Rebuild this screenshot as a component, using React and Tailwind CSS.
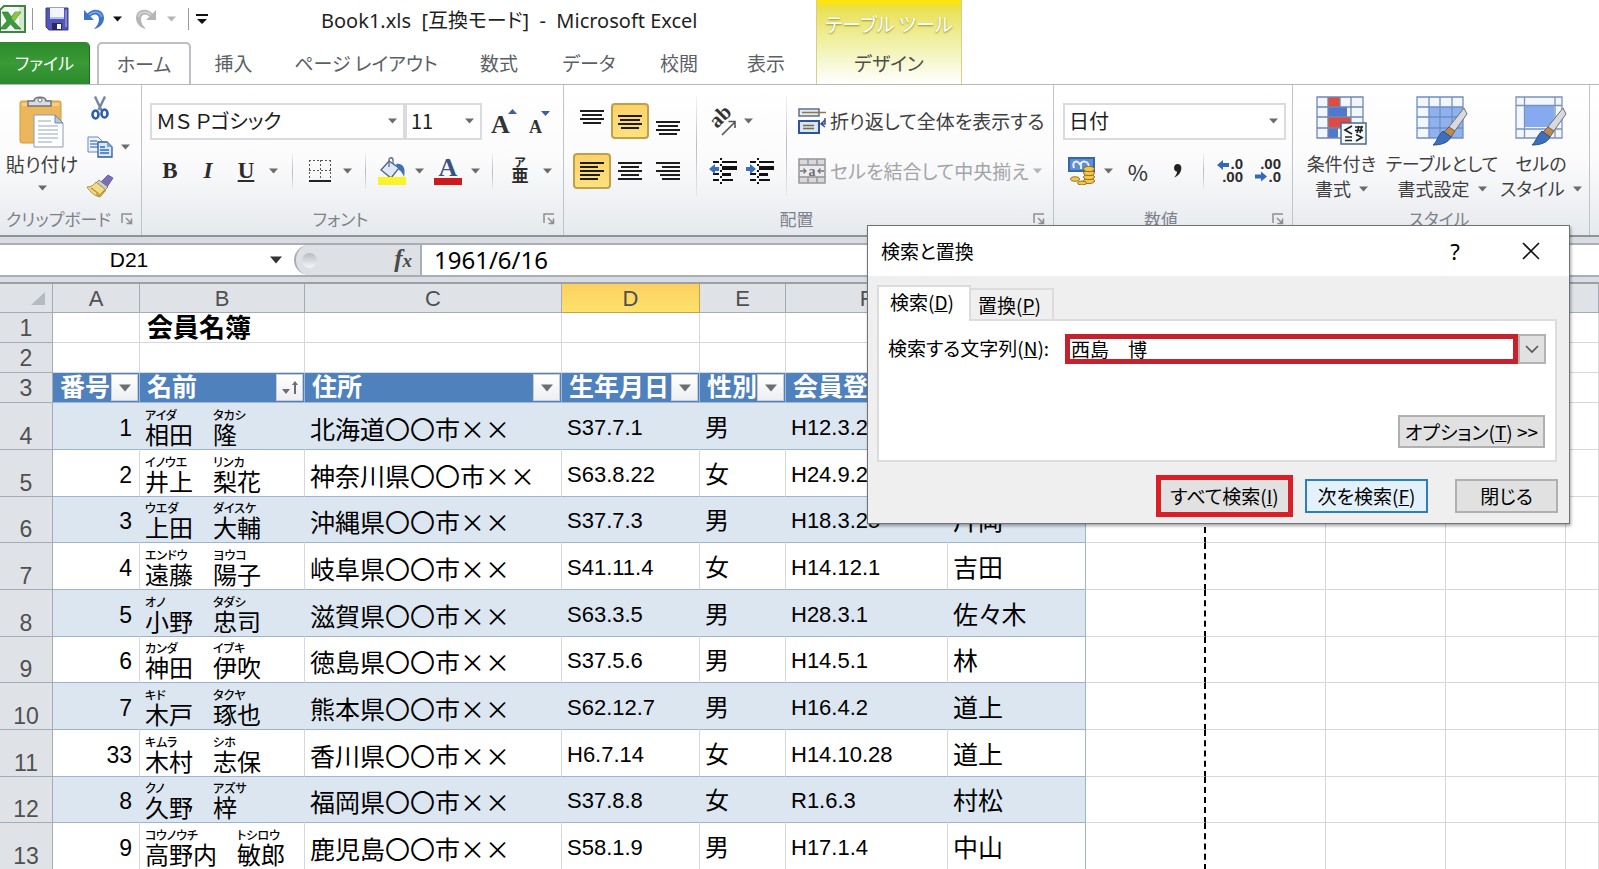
import { useState } from "react";

const tabs = [
  { label: "挿入", width: "w-[85px]" },
  { label: "ページ レイアウト", width: "w-[180px]" },
  { label: "数式", width: "w-[86px]" },
  { label: "データ", width: "w-[94px]" },
  { label: "校閲", width: "w-[86px]" },
  { label: "表示", width: "w-[88px]" },
];

const columns = [
  { letter: "A", width: "w-[87px]" },
  { letter: "B", width: "w-[165px]" },
  { letter: "C", width: "w-[257px]" },
  { letter: "D", width: "w-[138px]" },
  { letter: "E", width: "w-[86px]" },
  { letter: "F", width: "w-[162px]" },
  { letter: "G", width: "w-[138px]" },
  { letter: "H", width: "w-[120px]" },
  { letter: "I", width: "w-[120px]" },
  { letter: "J", width: "w-[120px]" },
  { letter: "K", width: "w-[120px]" },
  { letter: "L", width: "" },
];

const members = [
  { row: 4, no: 1, name: [["アイダ", "相田"], ["タカシ", "隆"]], pref: "北海道", birth: "S37.7.1", sex: "男", joined: "H12.3.2", staff: "" },
  { row: 5, no: 2, name: [["イノウエ", "井上"], ["リンカ", "梨花"]], pref: "神奈川県", birth: "S63.8.22", sex: "女", joined: "H24.9.2", staff: "" },
  { row: 6, no: 3, name: [["ウエダ", "上田"], ["ダイスケ", "大輔"]], pref: "沖縄県", birth: "S37.7.3", sex: "男", joined: "H18.3.25", staff: "片岡" },
  { row: 7, no: 4, name: [["エンドウ", "遠藤"], ["ヨウコ", "陽子"]], pref: "岐阜県", birth: "S41.11.4", sex: "女", joined: "H14.12.1", staff: "吉田" },
  { row: 8, no: 5, name: [["オノ", "小野"], ["タダシ", "忠司"]], pref: "滋賀県", birth: "S63.3.5", sex: "男", joined: "H28.3.1", staff: "佐々木" },
  { row: 9, no: 6, name: [["カンダ", "神田"], ["イブキ", "伊吹"]], pref: "徳島県", birth: "S37.5.6", sex: "男", joined: "H14.5.1", staff: "林" },
  { row: 10, no: 7, name: [["キド", "木戸"], ["タクヤ", "琢也"]], pref: "熊本県", birth: "S62.12.7", sex: "男", joined: "H16.4.2", staff: "道上" },
  { row: 11, no: 33, name: [["キムラ", "木村"], ["シホ", "志保"]], pref: "香川県", birth: "H6.7.14", sex: "女", joined: "H14.10.28", staff: "道上" },
  { row: 12, no: 8, name: [["クノ", "久野"], ["アズサ", "梓"]], pref: "福岡県", birth: "S37.8.8", sex: "女", joined: "R1.6.3", staff: "村松" },
  { row: 13, no: 9, name: [["コウノウチ", "高野内"], ["トシロウ", "敏郎"]], pref: "鹿児島", birth: "S58.1.9", sex: "男", joined: "H17.1.4", staff: "中山" },
];

const Caret = ({ className = "text-[#6b6b6b]" }) => (
  <svg viewBox="0 0 9 6" className={`h-[6px] w-[9px] shrink-0 ${className}`} fill="currentColor" aria-hidden="true">
    <path d="M0 0.5h9L4.5 5.5z" />
  </svg>
);

const CaretButton = ({ label, className }) => (
  <button type="button" aria-label={label} className={`flex h-9 items-center justify-center ${className}`}>
    <Caret />
  </button>
);

const Tool = ({ label, className = "w-[38px]", active = false, children }) => (
  <button
    type="button"
    aria-label={label}
    className={`flex h-9 shrink-0 items-center justify-center rounded-[4px] ${className} ${
      active ? "border-2 border-[#c2a04a] bg-linear-to-b from-[#fbd26a] to-[#fde27c]" : ""
    }`}
  >
    {children}
  </button>
);

const Separator = ({ className }) => (
  <div className={`flex shrink-0 justify-center ${className}`}>
    <div className="w-px bg-linear-to-b from-[#f4f4f4] via-[#b9bcc2] to-[#e8e8e8]" />
  </div>
);

const Launcher = () => (
  <button type="button" aria-label="ダイアログ起動" className="flex h-6 w-5 items-center justify-center">
    <svg viewBox="0 0 12 12" className="size-3" fill="none" stroke="#8f8f8f" strokeWidth="1.5">
      <path d="M1 10V1h10M5 5l5 5M10.500 5.500v5h-5" />
      <path d="M7 10.500l3.500-3.500v3.500z" fill="#8f8f8f" stroke="none" />
    </svg>
  </button>
);

const Group = ({ title, className, launcher = true, children }) => (
  <section className={`flex shrink-0 flex-col border-r border-[#bfc3ca] pt-[11px] ${className}`} aria-label={title}>
    <div className="h-[100px]">{children}</div>
    <div className="flex h-[39px] items-end pr-1 pb-1 text-[17px] leading-6 text-[#7d828c]">
      <div className="flex-1 text-center whitespace-nowrap">{title}</div>
      {launcher && <Launcher />}
    </div>
  </section>
);

const Combo = ({ label, value, className }) => (
  <div className={`relative h-[37px] shrink-0 ${className}`}>
    <select
      aria-label={label}
      className="h-full w-full appearance-none border-2 border-[#d9dbde] bg-white pr-6 pl-1 text-[20px] leading-7 text-[#1c1c1c]"
    >
      <option>{value}</option>
    </select>
    <div className="pointer-events-none absolute inset-y-0 right-2 flex items-center">
      <Caret />
    </div>
  </div>
);

// lines: [x, width] pairs, one every 4px
const Lines = ({ lines, className = "" }) => (
  <svg viewBox="0 0 24 20" className={`h-5 w-6 ${className}`} shapeRendering="crispEdges" fill="#1d1d1d">
    {lines.map(([x, w], i) => (
      <rect key={i} x={x} y={i * 4} width={w} height="2" />
    ))}
  </svg>
);

const vLines = [[0, 24], [2, 20], [0, 24], [3, 18]];

const ExcelLogo = () => (
  <svg viewBox="0 0 26 28" className="h-7 w-[26px]">
    <path d="M4 1h21v26H0V5z" fill="#f4faf2" stroke="#3f8346" strokeWidth="2" />
    <path d="M19 2h5v24h-5z" fill="#d3e8cf" />
    <path d="M2 7h6l3.500 5L15 7h6l-7 9.500 7 7.500h-6l-4.500-5L6 24H0l7-8z" fill="#3c9a3f" stroke="#23732b" strokeWidth="0.600" />
    <path d="M15 7h6l-7 9.500-2.500-3.500z" fill="#8cc63f" />
  </svg>
);

const SaveIcon = () => (
  <svg viewBox="0 0 24 24" className="size-6">
    <path d="M1 1h22v22H4l-3-3z" fill="#5356b5" stroke="#3a3c8c" />
    <path d="M5 1h14v11H5z" fill="#f3f5fc" />
    <path d="M5 10h14v2H5z" fill="#b9c3ea" />
    <path d="M7 16h10v7H7z" fill="#26286b" />
    <path d="M12 17h4v5h-4z" fill="#fff" />
    <path d="M20 3h2v17h-2z" fill="#8486d6" />
  </svg>
);

const UndoIcon = ({ color, light, flip }) => (
  <svg viewBox="0 0 22 22" className={`size-[22px] ${flip ? "-scale-x-100" : ""}`}>
    <path d="M1 2v10h10L7.500 8.500C11 5 16 6 16 11c0 4-2 7-5 10 6-1 10-6 10-11C21 1 10-1 4.500 5.500z" fill={color} />
    <path d="M6 7C11 2 18 4 18.500 9" fill="none" stroke={light} strokeWidth="1.500" />
  </svg>
);

const PasteIcon = () => (
  <svg viewBox="0 0 46 52" className="h-[52px] w-[46px]">
    <rect x="1" y="5" width="41" height="42" rx="2" fill="#ecb65a" stroke="#d39a3d" />
    <path d="M3 7h37v3H3z" fill="#f6cf86" />
    <path d="M9 10V5h6c0-5 12-5 12 0h5v5z" fill="#d9dce1" stroke="#6f757f" strokeWidth="1.500" />
    <circle cx="21" cy="4" r="2" fill="#fff" stroke="#6f757f" />
    <path d="M15 19h21l8 8v24H15z" fill="#fff" stroke="#8c9ab5" />
    <path d="M36 19v8h8z" fill="#b8c7e3" stroke="#6f84ad" />
    <path d="M19 25h13M19 30h20M19 34h20M19 38h20M19 42h20M19 46h14" stroke="#b6c3da" strokeWidth="1.500" />
  </svg>
);

const ScissorsIcon = () => (
  <svg viewBox="0 0 18 24" className="h-6 w-[18px]" fill="none">
    <path d="M4 0.500l6.500 14M14 0.500L7.500 14" stroke="#7485a6" strokeWidth="2.400" />
    <ellipse cx="4.500" cy="18.500" rx="3" ry="4" stroke="#2f5db0" strokeWidth="2.600" />
    <ellipse cx="13.500" cy="17.500" rx="3" ry="4" stroke="#2f5db0" strokeWidth="2.600" />
  </svg>
);

const CopyIcon = () => (
  <svg viewBox="0 0 26 22" className="h-[22px] w-[26px]">
    <path d="M1 1h10l4 4v11H1z" fill="#eef4fd" stroke="#6d88b5" />
    <path d="M3 5h7M3 8h9M3 11h9" stroke="#5d8bd0" strokeWidth="1.300" />
    <path d="M11 6h9l5 5v10H11z" fill="#d9e8fb" stroke="#2f5b9d" strokeWidth="1.300" />
    <path d="M20 6v5h5z" fill="#7fa6dd" />
    <path d="M13 11h5M13 14h9M13 17h9" stroke="#2f6cc2" strokeWidth="1.300" />
  </svg>
);

const BrushIcon = () => (
  <svg viewBox="0 0 28 24" className="h-6 w-7">
    <path d="M22 1l5 3-6 9-6-5z" fill="#7a6fb5" stroke="#554b8e" strokeWidth="0.800" />
    <path d="M13 6l9 7-3 3-9-7z" fill="#c9ced8" stroke="#6c7280" strokeWidth="0.800" />
    <path d="M10 8l10 8-6 7C9 22 4 18 1 13c4 0 7-2 9-5z" fill="#f0dc8a" stroke="#ad8f3a" />
    <path d="M5 14l8 6M10 20l3 2 6-6" stroke="#b98f2f" strokeWidth="1.300" fill="none" />
  </svg>
);

const GrowFont = ({ shrink }) => (
  <svg viewBox="0 0 28 30" className="h-[30px] w-7 overflow-visible">
    <text x="0" y="27" fontFamily="Liberation Serif, serif" fontWeight="700" fontSize={shrink ? 18 : 26} fill="#333">A</text>
    <path d={shrink ? "M12 5h9l-4.500 5z" : "M17 8h9l-4.500-5z"} fill="#3b5ea8" />
  </svg>
);

const BorderIcon = () => (
  <svg viewBox="0 0 24 24" className="size-6" shapeRendering="crispEdges" fill="none">
    <path d="M1 1.500h22M1 11.500h22M1.500 1v19M12 1v19M22.500 1v19" stroke="#555" strokeDasharray="2 2" />
    <path d="M1 22h22" stroke="#222" strokeWidth="2" />
  </svg>
);

const FillIcon = () => (
  <svg viewBox="0 0 28 28" className="size-7">
    <path d="M11 4l10 7-8 10L3 13z" fill="#dfe8f5" stroke="#4f6286" strokeWidth="1.300" />
    <path d="M11 10V3c0-3 4-3 4 0v4" fill="none" stroke="#5d6d8a" strokeWidth="1.300" />
    <path d="M18 7c7-1 10 4 8 13-1-3-3-6-5-7z" fill="#3e71b8" />
    <path d="M0 20h28v8H0z" fill="#fbf329" />
  </svg>
);

const FontColorIcon = () => (
  <svg viewBox="0 0 28 28" className="size-7 overflow-visible">
    <text x="14" y="19" textAnchor="middle" fontFamily="Liberation Serif, serif" fontWeight="700" fontSize="26" fill="#3b5382">A</text>
    <path d="M0 21h28v7H0z" fill="#cc1b1f" />
  </svg>
);

const OrientIcon = () => (
  <svg viewBox="0 0 28 28" className="mt-1 ml-1 size-7 shrink-0 overflow-visible">
    <text x="0" y="0" transform="translate(7 20) rotate(-45)" fontFamily="Liberation Serif, serif" fontWeight="700" fontSize="21" fill="#333">ab</text>
    <path d="M12 26l13-13M18.500 12.500H25V19" fill="none" stroke="#555" strokeWidth="1.600" />
  </svg>
);

const IndentIcon = ({ out }) => (
  <svg viewBox="0 0 28 26" className="h-[26px] w-7" fill="#111">
    <g shapeRendering="crispEdges">
      <path d="M4 3h6v2H4zM4 15h6v2H4zM4 21h6v2H4zM13 3h15v2H13zM13 8h15v4H13zM13 15h9v3H13zM13 21h11v2H13z" />
      <path d="M11 0h2v2h-2zM11 6h2v2h-2zM11 12h2v2h-2zM11 18h2v2h-2zM11 24h2v2h-2z" />
    </g>
    <path d={out ? "M0 11l6-5v3h4v4H6v3z" : "M10 11L4 6v3H0v4h4v3z"} fill="#3b6fc0" />
  </svg>
);

const WrapIcon = () => (
  <svg viewBox="0 0 28 26" className="h-[26px] w-7 shrink-0">
    <path d="M1 1h20v7H1z" fill="#e6eaf1" stroke="#5d6f8f" strokeWidth="1.500" />
    <path d="M4 4.500h24" stroke="#8d7b3d" strokeWidth="1.500" />
    <path d="M1 13h20v12H1z" fill="#d9e5f8" stroke="#2f549b" strokeWidth="2" />
    <path d="M5 17.500h11M5 20.500h11" stroke="#7d6d3a" strokeWidth="1.500" />
    <path d="M27 10v6h-3M27 12l-4 4 4 3" fill="none" stroke="#3a4f9b" strokeWidth="1.500" />
  </svg>
);

const MergeIcon = () => (
  <svg viewBox="0 0 28 26" className="h-[26px] w-7 shrink-0">
    <path d="M1 1h26v24H1z" fill="#d9d9dc" stroke="#97979b" strokeWidth="1.500" />
    <path d="M1 7h26M1 19h26M10 1v6M19 1v6M10 19v6M19 19v6" stroke="#97979b" strokeWidth="1.500" />
    <path d="M2 8h24v10H2z" fill="#ececee" />
    <text x="14" y="17.500" textAnchor="middle" fontFamily="Liberation Serif, serif" fontWeight="700" fontSize="14" fill="#6e6e72">a</text>
    <path d="M2 13h6M5.500 10.500L8 13l-2.500 2.500M26 13h-6M22.500 10.500L20 13l2.500 2.500" fill="none" stroke="#77777b" strokeWidth="1.300" />
  </svg>
);

const MoneyIcon = () => (
  <svg viewBox="0 0 28 28" className="size-7">
    <path d="M0 0h27v15H0z" fill="#3766ad" />
    <path d="M2 2h23v11H2z" fill="#5f8fd3" />
    <path d="M6 11c-3-8 5-8 6-3 1-5 9-5 9 3M13 5v7" fill="none" stroke="#e9f1fd" strokeWidth="2" />
    <g fill="#f2c84c" stroke="#8a6718" strokeWidth="0.900">
      <ellipse cx="21" cy="24" rx="5.500" ry="2.600" />
      <ellipse cx="21" cy="20" rx="5.500" ry="2.600" />
      <ellipse cx="21" cy="16" rx="5.500" ry="2.600" />
      <ellipse cx="21" cy="12" rx="5.500" ry="2.600" />
      <ellipse cx="7" cy="22" rx="4.500" ry="2.200" />
      <ellipse cx="14" cy="26" rx="4.500" ry="2" />
    </g>
  </svg>
);

const DecimalIcon = ({ less }) => (
  <svg viewBox="0 0 28 26" className="h-[26px] w-7 overflow-visible" fontFamily="Liberation Sans, sans-serif" fontWeight="700" fontSize="15" fill="#2b2b2b">
    <text x="27" y="11" textAnchor="end">{less ? ".00" : ".0"}</text>
    <text x="27" y="24" textAnchor="end">{less ? ".0" : ".00"}</text>
    <path
      d={less ? "M13 18.500L7 13.500v3H1v4h6v3z" : "M1 7l6-5v3h6v4H7v3z"}
      fill="#3569b5"
    />
  </svg>
);

const PaintBrush = () => (
  <g>
    <path d="M48 12l3 6-13 18-6-4z" fill="#d7d9dd" stroke="#6b6e75" />
    <path d="M33 31l6 4-4 6-7-5z" fill="#b98a55" stroke="#7d5c34" />
    <path d="M27 35l8 6c-3 6-10 8-18 8 4-3 5-10 10-14z" fill="#3f6fba" stroke="#2b5191" />
  </g>
);

const CondIcon = () => (
  <svg viewBox="0 0 52 50" className="h-[50px] w-[52px]">
    <path d="M1 1h46v41H1z" fill="#f2f7fd" />
    <path d="M12 1h12v10H12zM12 21h23v11H12z" fill="#e04a40" />
    <path d="M12 11h19v10H12zM12 32h10v10H12z" fill="#5078cf" />
    <path d="M1 1h46v41H1zM1 11h46M1 21h46M1 32h46M12 1v41M24 1v10M35 1v41" fill="none" stroke="#7088b0" strokeWidth="1.300" />
    <path d="M25 27h25v21H25z" fill="#f7fafd" stroke="#49698f" strokeWidth="1.500" />
    <path d="M36 30l-7 4 7 4M29 41h7M29 44.500h7M39 31h8M39 34.500h8M41 37l2-7M44 37l2-7M40 38.500l6 3-6 3.500" fill="none" stroke="#222" strokeWidth="1.700" />
  </svg>
);

const TableStyleIcon = () => (
  <svg viewBox="0 0 52 50" className="h-[50px] w-[52px]">
    <path d="M1 1h46v41H1z" fill="#f2f7fd" />
    <path d="M13 11h34v31H13z" fill="#8fb2ee" />
    <path d="M1 1h46v41H1zM1 11h46M1 21h46M1 32h46M13 1v41M24 1v41M36 1v41" fill="none" stroke="#6f8fc2" strokeWidth="1.300" />
    <PaintBrush />
  </svg>
);

const CellStyleIcon = () => (
  <svg viewBox="0 0 52 50" className="h-[50px] w-[52px]">
    <path d="M1 1h46v41H1z" fill="#f2f7fd" />
    <path d="M10 10h29v21H10z" fill="#86aaf0" />
    <path d="M1 1h46v41H1zM1 9.500h46M1 33h46M9.500 1v41M40 1v41" fill="none" stroke="#7d93b8" strokeWidth="1.300" />
    <PaintBrush />
  </svg>
);

const BigTool = ({ icon, lines, className }) => (
  <button type="button" className={`flex shrink-0 flex-col items-center text-[18px] leading-[25px] whitespace-nowrap text-[#3f3f3f] ${className}`}>
    {icon}
    <span className="mt-[5px]">{lines[0]}</span>
    <span className="flex items-center gap-2">
      {lines[1]}
      <Caret />
    </span>
  </button>
);

const Header = () => (
  <header className="flex h-[85px] border-b border-[#b5b8bd] bg-white">
    <div className="flex w-[816px] shrink-0 flex-col">
      <div className="flex h-[42px] items-center pb-1">
        <div className="flex w-[321px] items-center">
          <ExcelLogo />
          <div className="mx-[6px] h-[22px] w-px bg-[#9a9a9a]" />
          <button type="button" aria-label="上書き保存" className="ml-[6px]"><SaveIcon /></button>
          <button type="button" aria-label="元に戻す" className="ml-[14px]"><UndoIcon color="#3e74c4" light="#7fa9e4" /></button>
          <button type="button" aria-label="元に戻す一覧" className="ml-2"><Caret className="text-[#111]" /></button>
          <button type="button" aria-label="やり直し" className="ml-[13px]"><UndoIcon color="#b4b6ba" light="#d6d7da" flip /></button>
          <button type="button" aria-label="やり直し一覧" className="ml-[10px]"><Caret className="text-[#b4b6ba]" /></button>
          <div className="mx-[7px] ml-[12px] h-[22px] w-px bg-[#9a9a9a]" />
          <button type="button" aria-label="ツールバーのカスタマイズ">
            <svg viewBox="0 0 12 12" className="size-3"><path d="M0 1h12v2H0zM1 6h10l-5 5z" fill="#111" /></svg>
          </button>
        </div>
        <h1 className="pt-1 font-['Noto_Sans','Noto_Sans_CJK_JP',sans-serif] text-[20px] leading-7 whitespace-pre text-[#1f1f1f]">
          {"Book1.xls  [互換モード]  -  Microsoft Excel"}
        </h1>
      </div>
      <nav className="flex h-[43px] items-stretch text-[19px] leading-7 text-[#5c5f66]">
        <button type="button" className="w-[90px] rounded-tr-[5px] border-r border-[#1d6b22] bg-linear-to-b from-[#2c8a2c] via-[#3a9a35] to-[#2b8a2d] text-[17px] text-white">
          ファイル
        </button>
        <button type="button" className="ml-[7px] w-[94px] rounded-t-[5px] border-2 border-b-0 border-[#bcbfc4] bg-white">ホーム</button>
        {tabs.map((tab) => (
          <button key={tab.label} type="button" className={`whitespace-nowrap ${tab.width}`}>{tab.label}</button>
        ))}
      </nav>
    </div>
    <div className="flex w-[146px] shrink-0 flex-col border-x border-[#d5cf8a] bg-linear-to-b from-[#e9dc2c] via-[#f0f0a4] to-white text-[19px] leading-7">
      <div className="flex h-[42px] items-center justify-center border-t-[5px] border-[#fbe40f] text-white text-shadow-[0_1px_2px_#8d8a2f]">
        テーブル ツール
      </div>
      <button type="button" className="h-[42px] text-[#4f4f4a]">デザイン</button>
    </div>
  </header>
);

const Ribbon = () => (
  <div className="flex h-[152px] overflow-hidden border-b-2 border-[#8d929b] bg-linear-to-b from-white via-[#fbfbfc] to-[#e6e9ed]">
    <Group title="クリップボード" className="w-[142px]">
      <div className="flex">
        <button type="button" className="flex w-[84px] flex-col items-center text-[19px] leading-[25px] whitespace-nowrap text-[#3f3f3f]">
          <PasteIcon />
          <span className="mt-[3px]">貼り付け</span>
          <span className="flex h-6 items-center"><Caret /></span>
        </button>
        <div className="flex flex-col">
          <button type="button" aria-label="切り取り" className="flex h-[32px] w-[32px] items-start justify-center"><ScissorsIcon /></button>
          <button type="button" aria-label="コピー" className="flex h-[38px] w-[48px] items-center gap-2 pl-[3px]"><CopyIcon /><Caret /></button>
          <button type="button" aria-label="書式のコピー" className="flex h-[40px] w-[32px] items-center justify-center"><BrushIcon /></button>
        </div>
      </div>
    </Group>

    <Group title="フォント" className="w-[422px]">
      <div className="flex h-[50px] items-center pl-2">
        <Combo label="フォント名" value="ＭＳ Ｐゴシック" className="w-[255px]" />
        <Combo label="フォント サイズ" value="11" className="w-[77px]" />
        <Tool label="フォント サイズの拡大" className="w-[46px]"><GrowFont /></Tool>
        <Tool label="フォント サイズの縮小" className="w-[30px]"><GrowFont shrink /></Tool>
      </div>
      <div className="flex h-[50px] items-center pl-[9px] font-['Liberation_Serif','Noto_Sans_CJK_JP',serif] text-[23px] leading-7 text-[#2b2b2b]">
        <Tool label="太字"><b>B</b></Tool>
        <Tool label="斜体"><b className="italic">I</b></Tool>
        <Tool label="下線"><b className="underline">U</b></Tool>
        <CaretButton label="下線の種類" className="w-4" />
        <Separator className="h-9 w-[22px]" />
        <Tool label="罫線" className="w-[34px]"><BorderIcon /></Tool>
        <CaretButton label="罫線の種類" className="w-5" />
        <Separator className="h-9 w-4" />
        <Tool label="塗りつぶしの色"><FillIcon /></Tool>
        <CaretButton label="塗りつぶしの色一覧" className="w-4" />
        <Tool label="フォントの色" className="w-[42px]"><FontColorIcon /></Tool>
        <CaretButton label="フォントの色一覧" className="w-3" />
        <Separator className="h-9 w-[22px]" />
        <Tool label="ふりがなの表示" className="w-[34px] flex-col">
          <span className="text-[12px] leading-3 font-bold">ア</span>
          <span className="text-[17px] leading-4 font-bold">亜</span>
        </Tool>
        <CaretButton label="ふりがなの設定" className="w-5" />
      </div>
    </Group>

    <Group title="配置" className="w-[490px]">
      <div className="flex pl-[9px]">
        <div className="w-[115px]">
          <div className="flex h-[50px] items-center">
            <Tool label="上揃え"><Lines lines={vLines} className="-mt-0.5" /></Tool>
            <Tool label="上下中央揃え" active><Lines lines={vLines} className="mt-2" /></Tool>
            <Tool label="下揃え"><Lines lines={vLines} className="mt-5" /></Tool>
          </div>
          <div className="flex h-[50px] items-center">
            <Tool label="左揃え" active><Lines lines={[[0, 24], [0, 18], [0, 24], [0, 20], [0, 18]]} className="mt-0.5" /></Tool>
            <Tool label="中央揃え"><Lines lines={[[0, 24], [3, 18], [0, 24], [3, 18], [0, 24]]} className="mt-0.5" /></Tool>
            <Tool label="右揃え"><Lines lines={[[0, 24], [6, 18], [0, 24], [4, 20], [6, 18]]} className="mt-0.5" /></Tool>
          </div>
        </div>
        <Separator className="h-[100px] w-4" />
        <div className="w-[74px]">
          <div className="flex h-[50px] items-center">
            <Tool label="方向" className="w-9"><OrientIcon /></Tool>
            <CaretButton label="方向の設定" className="w-4" />
          </div>
          <div className="flex h-[50px] items-center">
            <Tool label="インデントを減らす" className="w-[37px]"><IndentIcon out /></Tool>
            <Tool label="インデントを増やす" className="w-[37px]"><IndentIcon /></Tool>
          </div>
        </div>
        <Separator className="h-[100px] w-4" />
        <div className="pl-1 text-[19px] leading-7 whitespace-nowrap text-[#3f3f3f]">
          <button type="button" className="flex h-[50px] items-center gap-1"><WrapIcon />折り返して全体を表示する</button>
          <button type="button" className="flex h-[50px] items-center gap-1 text-[#a3a4a7]">
            <MergeIcon />セルを結合して中央揃え
            <Caret className="text-[#b4b4b8]" />
          </button>
        </div>
      </div>
    </Group>

    <Group title="数値" className="w-[239px]">
      <div className="flex h-[50px] items-center pl-[9px]">
        <Combo label="表示形式" value="日付" className="w-[223px]" />
      </div>
      <div className="flex h-[50px] items-center pl-[9px] text-[#2f2f2f]">
        <Tool label="通貨表示形式"><MoneyIcon /></Tool>
        <CaretButton label="通貨の種類" className="w-[14px]" />
        <Tool label="パーセント スタイル" className="w-[46px]"><span className="text-[22px]">%</span></Tool>
        <Tool label="桁区切りスタイル" className="w-[34px]">
          <svg viewBox="0 0 10 14" className="h-[14px] w-[10px]"><path d="M4.500 0C8 0 9 3 8 6.500 7 10 4 12.500 1 13.500c2-2 3-4 3-6C0 7.500 0 0 4.500 0z" fill="#222" /></svg>
        </Tool>
        <Separator className="h-9 w-4" />
        <Tool label="小数点以下の表示桁数を増やす"><DecimalIcon /></Tool>
        <Tool label="小数点以下の表示桁数を減らす"><DecimalIcon less /></Tool>
      </div>
    </Group>

    <Group title="スタイル" launcher={false} className="w-[297px]">
      <div className="flex pl-1">
        <BigTool icon={<CondIcon />} lines={["条件付き", "書式"]} className="w-[89px]" />
        <BigTool icon={<TableStyleIcon />} lines={["テーブルとして", "書式設定"]} className="w-[112px]" />
        <BigTool icon={<CellStyleIcon />} lines={["セルの", "スタイル"]} className="w-[86px]" />
      </div>
    </Group>
  </div>
);

const FormulaBar = () => (
  <div className="border-b-2 border-[#9a9fa8] bg-[#d9dce1] pt-[6px] pb-[5px]">
    <div className="flex h-[34px] items-stretch border-y-2 border-[#a9adb5] bg-white text-black">
      <input
        aria-label="名前ボックス"
        defaultValue="D21"
        className="w-[258px] bg-white text-center font-['Liberation_Sans',sans-serif] text-[21px] outline-none"
      />
      <button type="button" aria-label="名前ボックスの一覧" className="flex w-[36px] items-center justify-center">
        <svg viewBox="0 0 12 8" className="h-2 w-3"><path d="M0 0.500h12L6 7.500z" fill="#333" /></svg>
      </button>
      <div className="flex w-[128px] items-center justify-between rounded-l-full border-r-2 border-l-2 border-[#a9adb5] bg-[#dde0e5] pr-[8px] pl-[6px]">
        <div className="size-[15px] rounded-full bg-linear-to-b from-[#b7bbc2] to-[#f7f8f9]" />
        <button type="button" aria-label="関数の挿入" className="font-['Liberation_Serif',serif] text-[25px] leading-7 font-bold text-[#4a4a4a] italic">
          f<span className="text-[19px]">x</span>
        </button>
      </div>
      <input
        aria-label="数式バー"
        defaultValue="1961/6/16"
        className="min-w-0 flex-1 bg-white pl-3 font-['Noto_Sans',sans-serif] text-[24px] outline-none"
      />
    </div>
  </div>
);

const FilterHeader = ({ title, sorted, className = "border-[#9db8dc]" }) => (
  <th className={`border-r border-b p-0 text-left ${className}`}>
    <div className="flex items-center justify-between overflow-hidden pl-[7px]">
      <span className="min-w-0 overflow-hidden whitespace-nowrap">{title}</span>
      <button
        type="button"
        aria-label={`${title} フィルター`}
        className="mr-px flex h-[27px] w-[27px] shrink-0 items-center justify-center border border-[#c9ccd3] bg-linear-to-b from-white to-[#eceef2]"
      >
        {sorted ? (
          <svg viewBox="0 0 18 18" className="size-[18px]"><path d="M1 10h8l-4 5zM13 3h2v12h-2zM11 6l3-4 3 4z" fill="#6e6e6e" /></svg>
        ) : (
          <svg viewBox="0 0 12 8" className="h-2 w-3"><path d="M0 0.500h12L6 7.500z" fill="#6e6e6e" /></svg>
        )}
      </button>
    </div>
  </th>
);

const rowHead = "border-r border-b border-[#a4abb6] bg-[#dfe2e7] p-0 text-center text-[23px] leading-[25px] font-normal text-[#505050]";

// H carries the page-break line on its right edge
const BlankCells = ({ letters, line = "border-b-[#d6d8db]" }) =>
  letters.map((letter) => (
    <td
      key={letter}
      className={`border-b ${line} ${letter === "H" ? "border-r-2 border-r-black [border-right-style:dashed]" : "border-r border-r-[#d6d8db]"}`}
    />
  ));

const Sheet = () => (
  <table className="w-full table-fixed border-separate border-spacing-0 bg-white font-['Liberation_Sans','Noto_Sans_CJK_JP',sans-serif] text-black">
    <colgroup>
      <col className="w-[53px]" />
      {columns.map((c) => (
        <col key={c.letter} className={c.width} />
      ))}
    </colgroup>
    <thead>
      <tr className="h-[29px]">
        <th className="border-r border-b border-[#a4abb6] bg-[#dfe2e7] p-0">
          <svg viewBox="0 0 14 13" className="ml-auto mr-[7px] h-[13px] w-[14px]"><path d="M14 0v13H0z" fill="#b5b9c0" /></svg>
        </th>
        {columns.map((c) => (
          <th
            key={c.letter}
            scope="col"
            className={`border-r border-b p-0 pt-0.5 text-[22px] leading-6 font-normal text-[#505050] ${
              c.letter === "D" ? "border-[#c9a23c] bg-linear-to-b from-[#fcd060] to-[#fde26c]" : "border-[#a4abb6] bg-[#dfe2e7]"
            }`}
          >
            {c.letter < "G" ? c.letter : ""}
          </th>
        ))}
      </tr>
    </thead>
    <tbody>
      <tr className="h-[30px]">
        <th scope="row" className={`${rowHead} pt-0.5`}>1</th>
        <BlankCells letters={["A"]} />
        <td className="border-r border-b border-[#d6d8db] p-0 pt-0.5 pl-[7px] text-[26px] leading-[27px] font-bold whitespace-nowrap">会員名簿</td>
        <BlankCells letters={["C", "D", "E", "F", "G", "H", "I", "J", "K", "L"]} />
      </tr>
      <tr className="h-[30px]">
        <th scope="row" className={`${rowHead} pt-0.5`}>2</th>
        <BlankCells letters={["A", "B", "C", "D", "E", "F", "G", "H", "I", "J", "K", "L"]} />
      </tr>
      <tr className="h-[30px] text-[25px] leading-[29px] text-white *:nth-[-n+8]:bg-[#4f81bd]">
        <th scope="row" className="border-r border-b border-[#a4abb6] bg-[#dfe2e7]! p-0 pt-0.5 text-center text-[23px] leading-[25px] font-normal text-[#505050]">3</th>
        <FilterHeader title="番号" />
        <FilterHeader title="名前" sorted />
        <FilterHeader title="住所" />
        <FilterHeader title="生年月日" />
        <FilterHeader title="性別" />
        <FilterHeader title="会員登" />
        <th className="border-r border-b border-[#95b3d7]" />
        <BlankCells letters={["H", "I", "J", "K", "L"]} />
      </tr>
      {members.map((m, i) => {
        const band = i % 2 === 0;
        const cell = `border-r border-b border-b-[#9db4cf] p-0 pt-[3px] pl-[5px] whitespace-nowrap ${
          band ? "border-r-[#dce6f1] bg-[#dce6f1]" : "border-r-[#d6d8db]"
        }`;
        return (
          <tr key={m.row} className={i % 3 === 2 ? "h-[46px]" : "h-[47px]"}>
            <th scope="row" className={`${rowHead} align-bottom`}>{m.row}</th>
            <td className={`${cell} pr-[7px] text-right text-[23px] leading-[26px]`}>{m.no}</td>
            <td className={cell}>
              <div className="flex gap-5 pt-0.5">
                {m.name.map(([kana, kanji]) => (
                  <div key={kanji} className={kanji.length > 1 ? "" : "w-6"}>
                    <div className="text-[12px] leading-[14px] font-medium whitespace-nowrap">{kana}</div>
                    <div className="text-[24px] leading-[26px]">{kanji}</div>
                  </div>
                ))}
              </div>
            </td>
            <td className={`${cell} font-['Noto_Sans_CJK_JP',sans-serif] text-[25px] leading-[30px] [font-feature-settings:normal]`}>{m.pref}〇〇市××</td>
            <td className={`${cell} text-[22px] leading-[30px]`}>{m.birth}</td>
            <td className={`${cell} text-[24px] leading-[30px]`}>{m.sex}</td>
            <td className={`${cell} text-[22px] leading-[30px]`}>{m.joined}</td>
            <td className={`${cell} border-r-[#9db4cf]! text-[25px] leading-[30px]`}>{m.staff}</td>
            <BlankCells letters={["H", "I", "J", "K", "L"]} />
          </tr>
        );
      })}
    </tbody>
  </table>
);

const FindDialog = () => {
  const [query, setQuery] = useState("西島　博");

  return (
    <div
      role="dialog"
      aria-labelledby="find-title"
      className="absolute top-[225px] left-[867px] w-[703px] border border-[#6f7276] bg-[#efefef] text-[19px] leading-6 text-black shadow-[1px_2px_3px_rgba(0,0,0,0.35)]"
    >
      <div className="flex h-[50px] items-center bg-white pl-[13px]">
        <h2 id="find-title" className="flex-1">検索と置換</h2>
        <button type="button" aria-label="ヘルプ" className="w-[76px] font-['Noto_Sans',sans-serif] text-[22px]">?</button>
        <button type="button" aria-label="閉じる" className="flex w-[76px] justify-center">
          <svg viewBox="0 0 18 18" className="size-[18px]"><path d="M1 1l16 16M17 1L1 17" stroke="#111" strokeWidth="1.600" /></svg>
        </button>
      </div>

      <div className="pt-[10px] pr-3 pl-[9px]">
        <div role="tablist" className="flex h-[33px] items-end">
          <button type="button" role="tab" aria-selected="true" className="z-10 -mb-0.5 h-[36px] w-[94px] border-2 border-b-0 border-[#dcdcdc] bg-white pr-1 pb-1">
            検索(<u>D</u>)
          </button>
          <button type="button" role="tab" aria-selected="false" className="h-[31px] w-[83px] border-2 border-b-0 border-l-0 border-[#dcdcdc] pr-1">
            置換(<u>P</u>)
          </button>
        </div>
        <div className="border-2 border-[#dcdcdc] bg-white pt-[13px] pr-[9px] pb-3 pl-[9px]">
          <div className="flex h-[30px]">
            <label htmlFor="find-text" className="w-[177px] shrink-0 leading-7">検索する文字列(<u>N</u>):</label>
            <input
              id="find-text"
              value={query}
              onChange={(e) => setQuery(e.target.value)}
              className="min-w-0 flex-1 border-[5px] border-[#c4222c] bg-white pl-px leading-5 outline-none"
            />
            <button type="button" aria-label="検索履歴" className="flex w-7 items-center justify-center border-2 border-[#b3b3b3] bg-[#e1e1e1]">
              <svg viewBox="0 0 14 9" className="h-[9px] w-[14px]"><path d="M1 1l6 6 6-6" fill="none" stroke="#555" strokeWidth="1.600" /></svg>
            </button>
          </div>
          <div className="mt-[51px] flex justify-end pr-px">
            <button type="button" className="h-[33px] w-[147px] border-2 border-[#b0b0b0] bg-[#e1e1e1] leading-5 whitespace-nowrap">
              オプション(<u>T</u>) &gt;&gt;
            </button>
          </div>
        </div>
      </div>

      <div className="flex items-center justify-end pt-[13px] pr-[11px] pb-[6px]">
        <button type="button" className="h-[42px] w-[137px] border-[5px] border-[#da1f27] bg-[#e1e1e1] leading-5 whitespace-nowrap">
          すべて検索(<u>I</u>)
        </button>
        <button type="button" className="ml-3 h-[34px] w-[123px] border-2 border-[#2b7fc0] bg-[#e3f1fb] leading-5 whitespace-nowrap">
          次を検索(<u>F</u>)
        </button>
        <button type="button" className="ml-[27px] h-[34px] w-[103px] border-2 border-[#b0b0b0] bg-[#e1e1e1] leading-5">閉じる</button>
      </div>
    </div>
  );
};

export default function App() {
  return (
    <main className="relative h-screen overflow-hidden bg-white font-['Noto_Sans_CJK_JP',sans-serif] [font-feature-settings:'palt']">
      <Header />
      <Ribbon />
      <FormulaBar />
      <Sheet />
      <FindDialog />
    </main>
  );
}
